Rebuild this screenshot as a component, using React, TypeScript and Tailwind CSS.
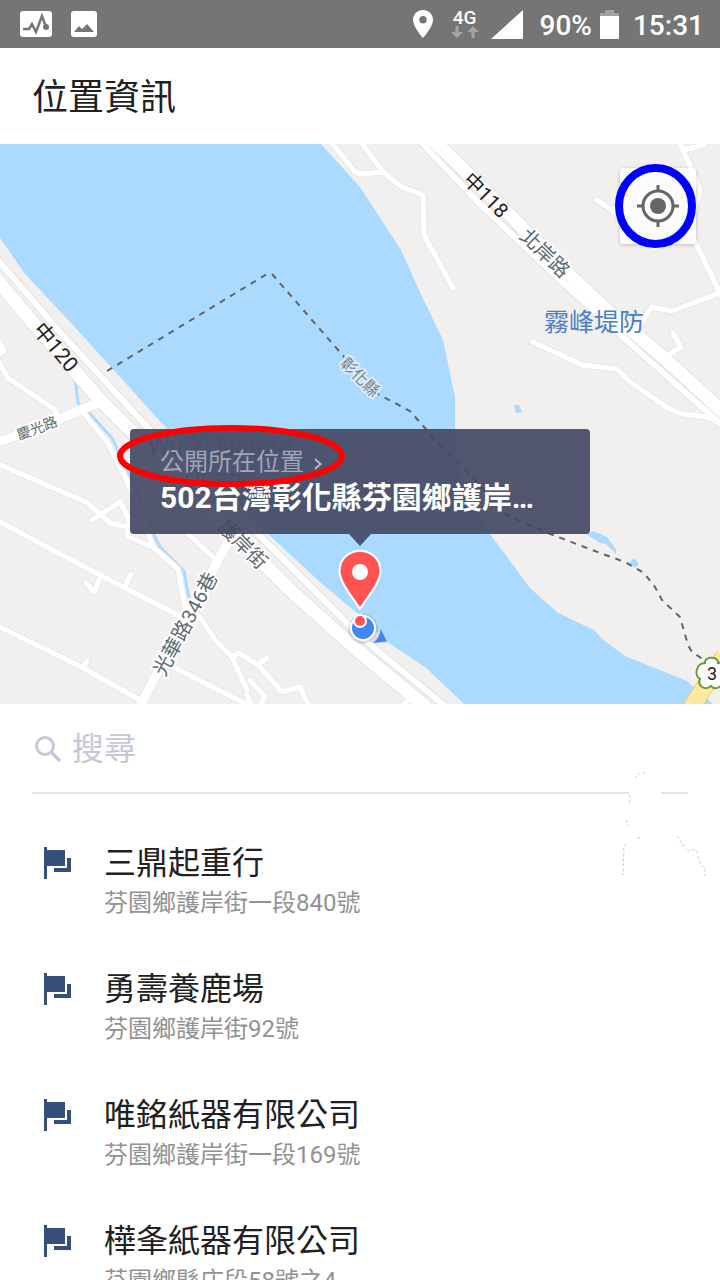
type Place = {
  name: string
  address: string
}

type MapLabel = {
  text: string
  x: number
  y: number
  angle: number
  size: number
  fill: string
  halo?: string
}

const places: Place[] = [
  { name: '三鼎起重行', address: '芬園鄉護岸街一段840號' },
  { name: '勇壽養鹿場', address: '芬園鄉護岸街92號' },
  { name: '唯銘紙器有限公司', address: '芬園鄉護岸街一段169號' },
  { name: '樺夆紙器有限公司', address: '芬園鄉縣庄段58號之4' },
]

const localRoads = [
  'M-2 340 L4 351 L-4 356',
  'M-4 358 L8 378 L54 409 L60 418',
  'M83 412 L108 443 L128 483 L143 517 L153 547 L178 569 L185 607 L200 617 L215 640 L232 657 L247 690',
  'M-4 463 L88 503 L110 523 L128 527',
  'M92 520 L120 502 L128 517 L128 537 L153 547',
  'M-4 520 L100 575 L182 617',
  'M100 577 L95 592 L86 583',
  'M125 587 L131 574',
  'M-4 625 L83 668 L140 700',
  'M83 668 L87 661',
  'M187 533 L213 557',
  'M175 668 L250 706',
  'M232 657 L239 653 L258 665 L282 692 L300 687 L309 706',
  'M258 665 L267 658',
  'M250 680 L265 697 L260 706',
  'M247 695 L252 706',
  'M402 706 L410 698',
  'M331 142 L355 172 L360 174 L383 172',
  'M361 142 L383 172 L402 187 L423 195 L424 235 L453 288',
  'M679 142 L693 172 L700 190 L693 215 L693 237 L722 298',
  'M683 150 L704 145',
  'M597 200 L613 211 L655 248 L693 230',
  'M613 211 L622 200',
  'M722 292 L672 311 L652 307 L638 328',
  'M665 357 L681 347 L673 333',
  'M533 342 L582 365 L617 369 L630 382 L668 408 L682 414 L708 417 L722 425',
]

const mediumRoads = ['M-4 443 L20 434 L57 420 L100 402', 'M140 706 L155 677 L230 538']

const riverRoads = [
  'M-4 258 L60 332 L150 430 L267 543 L347 623 L373 647 L445 706',
  'M421 142 L480 204 L560 280 L623 337 L722 425',
]

const highways = [
  'M-4 279 L35 325 L100 400 L160 460 L290 590 L357 650 L425 706',
  'M433 140 L490 195 L567 273 L607 310 L663 357 L724 413',
]

const labels: MapLabel[] = [
  { text: '中120', x: 56, y: 347, angle: 50, size: 21, fill: '#202020' },
  { text: '中118', x: 486, y: 195, angle: 45, size: 20, fill: '#202020' },
  { text: '北岸路', x: 545, y: 253, angle: 44, size: 20, fill: '#5d6b70', halo: '#ffffff' },
  { text: '慶光路', x: 37, y: 428, angle: -20, size: 14, fill: '#5d6b70', halo: '#ffffff' },
  { text: '護岸街', x: 243, y: 544, angle: 45, size: 20, fill: '#5d6b70', halo: '#ffffff' },
  { text: '光華路346巷', x: 185, y: 624, angle: -62, size: 20, fill: '#5d6b70', halo: '#ffffff' },
  { text: '彰化縣', x: 360, y: 377, angle: 45, size: 16, fill: '#7a7f84', halo: '#d8ecfb' },
  { text: '霧峰堤防', x: 594, y: 322, angle: 0, size: 25, fill: '#4a80c8' },
  { text: "Wu Xi Nan'an", x: 220, y: 446, angle: 0, size: 25, fill: '#8fb2e0' },
  { text: 'Ditang', x: 220, y: 478, angle: 0, size: 25, fill: '#8fb2e0' },
]

function RoadGroup({ paths, className }: { paths: string[]; className: string }) {
  return (
    <g fill="none" strokeLinejoin="round" strokeLinecap="round" className={className}>
      {paths.map((d) => (
        <path key={d} d={d} />
      ))}
    </g>
  )
}

function MapCanvas() {
  return (
    <svg
      viewBox="0 144 720 560"
      preserveAspectRatio="xMidYMid slice"
      className="block h-full w-full bg-[#f1f0ef]"
      aria-hidden="true"
    >
      <g fill="#aadaff">
        <path d="M0 144 H321 L360 187 L401 250 L419 290 L443 340 L455 397 V460 L470 500 L490 534 L530 588 L558 613 L594 630 L602 639 L625 656 L687 681 L696 689 L713 704 H464 L425 667 L398 649 L386 641 L358 614 L320 582 L268 534 L166 428 L112 368 L72 324 L25 274 L0 238 Z" />
        <path d="M514 405 L519 405 L522 412 L516 413 Z" />
        <path d="M586 534 L593 531 L607 537 L616 549 L616 554 L606 544 L600 543 Z" />
        <path d="M634 558 L639 564 L635 568 L629 563 Z" />
      </g>
      <path
        d="M75 378 L78 403 L90 414 L112 438 L130 475 L153 533 L160 547 L184 571 L189 598"
        fill="none"
        stroke="#aadaff"
        strokeWidth="3"
      />

      <RoadGroup paths={localRoads} className="stroke-[#e9e8e7] stroke-[7px]" />
      <RoadGroup paths={mediumRoads} className="stroke-[#e9e8e7] stroke-[11px]" />
      <RoadGroup paths={riverRoads} className="stroke-[#e4e3e2] stroke-[8px]" />
      <RoadGroup paths={highways} className="stroke-[#e4e3e2] stroke-[15px]" />
      <RoadGroup paths={localRoads} className="stroke-white stroke-[5px]" />
      <RoadGroup paths={mediumRoads} className="stroke-white stroke-[9px]" />
      <RoadGroup paths={riverRoads} className="stroke-white stroke-[6px]" />
      <RoadGroup paths={highways} className="stroke-white stroke-[13px]" />

      <path d="M690 710 L724 656" stroke="#f0cf7c" strokeWidth="18" />
      <path d="M690 710 L724 656" stroke="#ffe9a0" strokeWidth="16" />

      <g fill="none" stroke="#636363" strokeWidth="2" strokeDasharray="6 6">
        <path d="M107 371 L267 274" />
        <path d="M272 274 L345 358" />
        <path d="M374 392 L410 411 L440 445 L478 483 L505 514 L540 530 L600 553 L625 562 L644 573 L655 587 L662 600 L680 617 L688 645 L692 652 L707 662" />
      </g>

      <g textAnchor="middle" className="font-['Roboto','Noto_Sans_CJK_TC',sans-serif]">
        {labels.map((label) => (
          <text
            key={label.text}
            fontSize={label.size}
            fill={label.fill}
            stroke={label.halo ?? 'none'}
            strokeWidth="4"
            strokeLinejoin="round"
            paintOrder="stroke"
            dy="0.36em"
            transform={`translate(${label.x} ${label.y}) rotate(${label.angle})`}
          >
            {label.text}
          </text>
        ))}
      </g>

      <path
        d="M705 663 C704 656 719 656 718 663 C726 661 730 673 722 677 C725 686 716 691 711 686 C705 691 697 686 700 679 C694 676 696 663 705 663 Z"
        fill="#ffffff"
        stroke="#6a9d3c"
        strokeWidth="2"
      />
      <text
        x="712"
        y="680"
        fontSize="18"
        textAnchor="middle"
        fill="#202020"
        className="font-['Roboto',sans-serif]"
      >
        3
      </text>

      {/* current position and dropped pin */}
      <circle cx="363" cy="629" r="15" fill="#000000" opacity="0.12" />
      <path d="M380 630 L386 643 L371 643 Z" fill="#d9dde2" />
      <path d="M380.500 629 L387 641.500 L373 643 Q380 638 380.500 629 Z" fill="#4285f4" />
      <circle cx="363" cy="628" r="12" fill="#4285f4" stroke="#ffffff" strokeWidth="2" />
      <circle cx="360" cy="621" r="6" fill="#ff5452" stroke="#ffffff" strokeWidth="2" />
      <path
        d="M360 609 C355 600 339.500 583 339.500 571 C339.500 559 348.500 551 360 551 C371.500 551 380.500 559 380.500 571 C380.500 583 365 600 360 609 Z"
        fill="#ff5452"
        stroke="#ffffff"
        strokeWidth="2"
      />
      <circle cx="360" cy="572" r="8" fill="#ffffff" />
    </svg>
  )
}

function StatusBar() {
  return (
    <header className="flex h-12 shrink-0 items-center bg-[#757575] pr-4 pl-5 text-[28px] font-medium text-white">
      <svg viewBox="0 0 32 26" className="h-[26px] w-8">
        <rect width="32" height="26" rx="3" fill="#ffffff" />
        <path d="M3 18 H9 L12 13 L16 21 L22 5 L26 16" fill="none" stroke="#757575" strokeWidth="2.500" />
        <circle cx="26" cy="16" r="3" fill="#757575" />
      </svg>
      <svg viewBox="0 0 26 26" className="ml-[19px] size-[26px]">
        <rect width="26" height="26" rx="3" fill="#ffffff" />
        <path d="M3 21 L8 15 L11 18 L16 13 L23 21 Z" fill="#757575" />
      </svg>

      <div className="ml-auto flex items-center">
        <svg viewBox="0 0 20 28" className="h-7 w-5">
          <path
            d="M10 0 C4.500 0 0 4.300 0 9.800 C0 17 10 28 10 28 C10 28 20 17 20 9.800 C20 4.300 15.500 0 10 0 Z M10 13.500 A3.700 3.700 0 1 1 10 6.100 A3.700 3.700 0 0 1 10 13.500 Z"
            fill="#ffffff"
          />
        </svg>
        <div className="ml-4 flex w-8 flex-col items-center">
          <span className="text-[19px] leading-4">4G</span>
          <svg viewBox="0 0 28 12" className="h-3 w-7" fill="#a3a3a3">
            <path d="M4.500 0 H7.500 V6 H12 L6 12 L0 6 H4.500 Z" />
            <path d="M20.500 12 H23.500 V6 H28 L22 0 L16 6 H20.500 Z" />
          </svg>
        </div>
        <svg viewBox="0 0 32 29" className="ml-[10px] h-[29px] w-8">
          <path d="M32 0 V29 H0 Z" fill="#ffffff" />
        </svg>
        <span className="ml-[17px] pt-1 leading-9">90%</span>
        <svg viewBox="0 0 19 29" className="ml-2 h-[29px] w-[19px]">
          <path d="M5 0 H14 V3 H19 V6 H0 V3 H5 Z" fill="#a3a3a3" />
          <path d="M0 6 H19 V29 H0 Z" fill="#ffffff" />
        </svg>
        <span className="ml-[14px] pt-1 leading-9">15:31</span>
      </div>
    </header>
  )
}

function LocateButton() {
  return (
    <button
      type="button"
      aria-label="定位"
      className="absolute top-6 right-6 flex size-[76px] items-center justify-center rounded-sm bg-white/80 shadow-[0_1px_4px_rgba(0,0,0,0.2)]"
    >
      <svg viewBox="0 0 42 42" className="size-[42px]">
        <circle cx="21" cy="21" r="15" fill="none" stroke="#666666" strokeWidth="3" />
        <circle cx="21" cy="21" r="8" fill="#666666" />
        <path d="M21 0 V6 M21 36 V42 M0 21 H6 M36 21 H42" stroke="#666666" strokeWidth="3" />
      </svg>
    </button>
  )
}

function LocationCallout() {
  return (
    <button
      type="button"
      className="absolute top-[285px] left-1/2 flex h-[105px] w-[460px] -translate-x-1/2 flex-col rounded-sm bg-[#414561]/90 px-[30px] pt-[15px] text-left"
    >
      <span className="flex items-center text-[24px] leading-9 text-[#a2a5b3]">
        公開所在位置
        <svg viewBox="0 0 8 12" className="mt-1 ml-[10px] h-3 w-2">
          <path d="M1 1 L6.500 6 L1 11" fill="none" stroke="#b5b8c4" strokeWidth="2" />
        </svg>
      </span>
      <span className="block truncate text-[30px] leading-9 font-bold text-white">
        502台灣彰化縣芬園鄉護岸…
      </span>
      <svg viewBox="0 0 22 12" className="absolute top-full left-1/2 h-3 w-[22px] -translate-x-1/2">
        <path d="M0 0 H22 L11 12 Z" fill="#414561" fillOpacity="0.9" />
      </svg>
    </button>
  )
}

function FlagIcon() {
  return (
    <svg viewBox="0 0 28 32" className="h-8 w-7 shrink-0" fill="#364e7a" aria-hidden="true">
      <path d="M0 0 H3 V3 H21 V19 H3 V32 H0 Z" />
      <path d="M23 11 H27 V25 H10 V21 H23 Z" />
    </svg>
  )
}

function PlaceRow({ place }: { place: Place }) {
  return (
    <li className="flex h-[126px] shrink-0 pl-11">
      <div className="pt-[7px]">
        <FlagIcon />
      </div>
      <div className="ml-8">
        <h2 className="text-[32px] leading-[46px] text-[#212121]">{place.name}</h2>
        <p className="text-[24px] leading-[34px] text-[#929292]">{place.address}</p>
      </div>
    </li>
  )
}

export default function App() {
  return (
    <div className="flex h-screen flex-col overflow-hidden bg-white font-['Roboto','Noto_Sans_CJK_TC',sans-serif]">
      <StatusBar />
      <div className="flex h-24 shrink-0 items-center px-8 pt-1">
        <h1 className="text-[36px] leading-[48px] text-[#212121]">位置資訊</h1>
      </div>

      <section className="relative h-[560px] shrink-0" aria-label="地圖">
        <MapCanvas />
        <LocateButton />
        <LocationCallout />
        <svg
          viewBox="0 0 82 84"
          className="pointer-events-none absolute top-5 right-6 h-[84px] w-[82px]"
        >
          <ellipse cx="41.500" cy="42" rx="36.500" ry="38" fill="none" stroke="#0000ff" strokeWidth="8" />
        </svg>
        <svg
          viewBox="0 0 230 62"
          className="pointer-events-none absolute top-[281px] left-1/2 -ml-[244px] h-[62px] w-[230px]"
        >
          <ellipse cx="115" cy="31" rx="111" ry="28" fill="none" stroke="#ff0000" strokeWidth="6" />
        </svg>
      </section>

      <div className="relative mx-8 flex h-[90px] shrink-0 items-center border-b-2 border-[#e2e2e8] pt-[2px]">
        <svg viewBox="0 0 28 28" className="ml-[2px] size-7" aria-hidden="true">
          <circle cx="11" cy="11" r="8.500" fill="none" stroke="#c5c8d8" strokeWidth="3" />
          <path d="M17 17 L26 26" stroke="#c5c8d8" strokeWidth="3.500" />
        </svg>
        <input
          type="text"
          aria-label="搜尋"
          placeholder="搜尋"
          className="ml-[10px] h-12 min-w-0 flex-1 text-[32px] text-[#212121] outline-none placeholder:text-[#c5c8d8]"
        />
        <svg
          viewBox="0 0 84 106"
          className="pointer-events-none absolute top-[67px] -right-[18px] h-[106px] w-[84px]"
        >
          <path d="M7 20 H39 V28 H7 Z" fill="#ffffff" />
          <g fill="none" stroke="#cccccc" strokeWidth="1" strokeDasharray="3 2">
            <path d="M13 7 L18 2 M21 3 L23 0" />
            <path d="M8 24 L7 34 M4 49 L7 55 M15 67 H18" />
            <path d="M4 73 L2 76 L1 104" />
            <path d="M55 65 L59 71 L66 81 L69 78 L75 80 L78 92 L83 98 V105" />
          </g>
        </svg>
      </div>

      <ul className="min-h-0 flex-1 overflow-hidden pt-[46px]">
        {places.map((place) => (
          <PlaceRow key={place.name} place={place} />
        ))}
      </ul>
    </div>
  )
}
